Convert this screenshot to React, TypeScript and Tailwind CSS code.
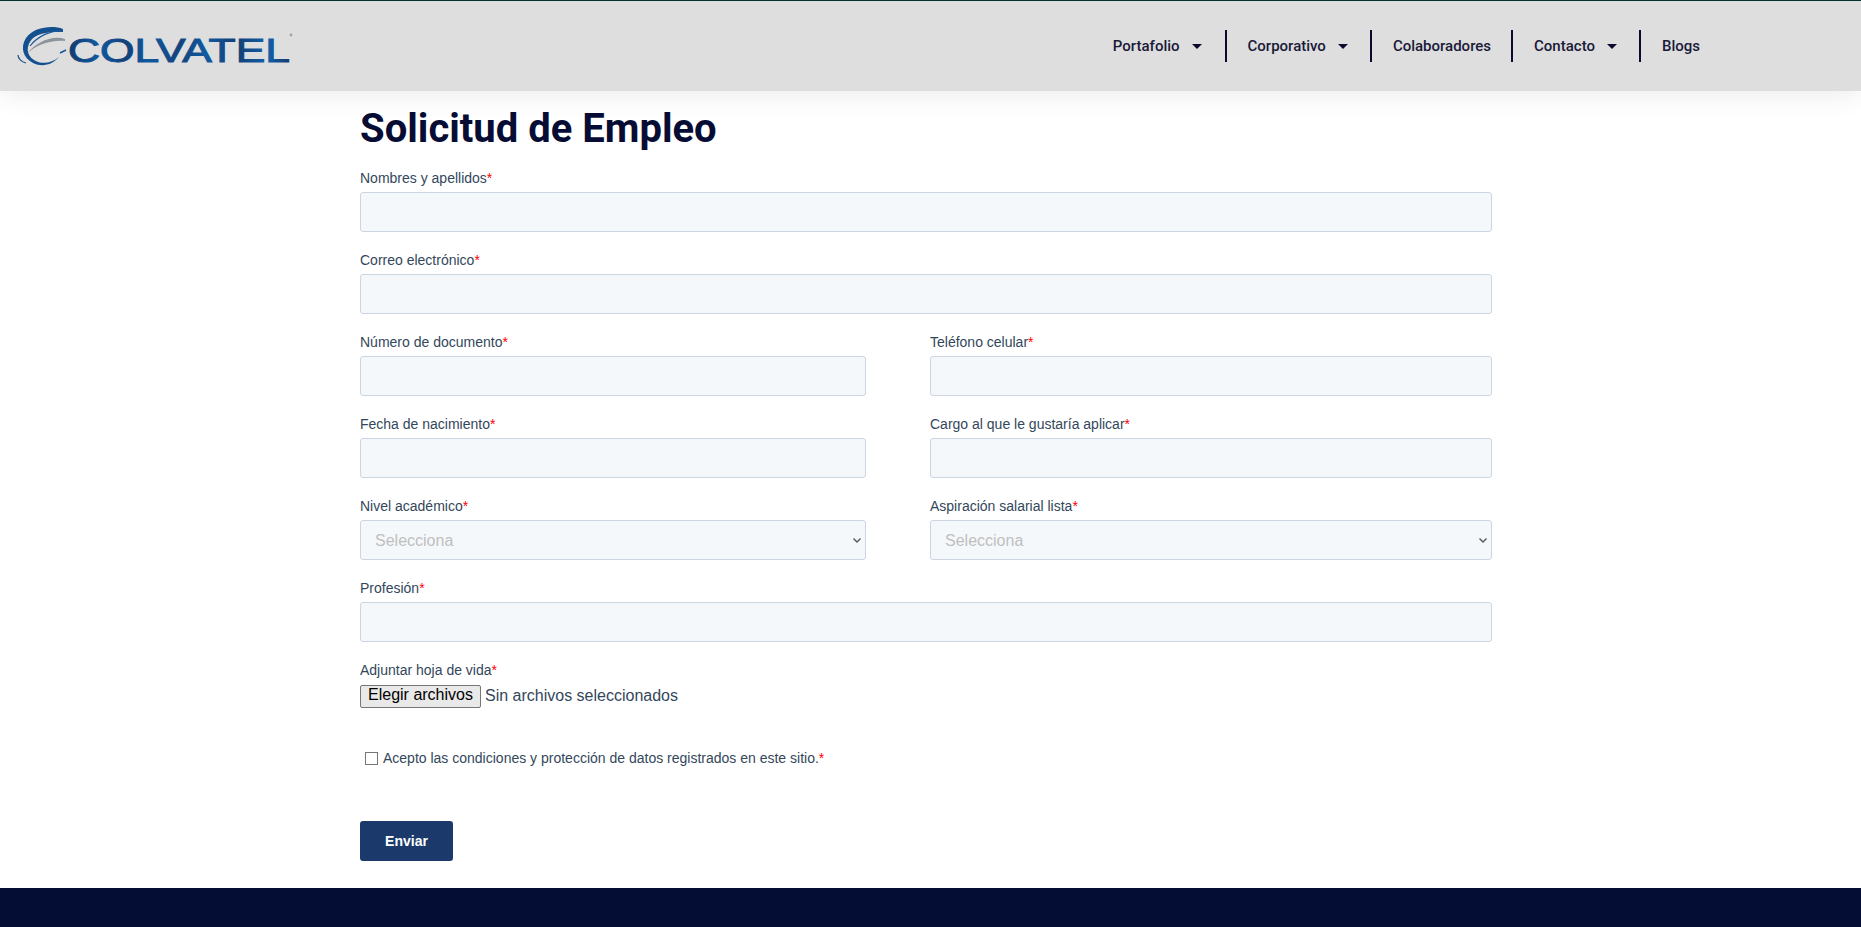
import type { ReactNode } from "react";

const navItems = [
  { label: "Portafolio", caret: true, pad: "pr-[23px]" },
  { label: "Corporativo", caret: true, pad: "pr-[22px]" },
  { label: "Colaboradores", caret: false, pad: "pr-[20px]" },
  { label: "Contacto", caret: true, pad: "pr-[22px]" },
  { label: "Blogs", caret: false, pad: "pr-[21px]" },
];

const Logo = () => (
  <svg width="280" height="56" viewBox="0 0 280 56" className="block">
    <defs>
      <linearGradient id="word" x1="52" y1="0" x2="274" y2="0" gradientUnits="userSpaceOnUse">
        <stop offset="0" stopColor="#123a6e" />
        <stop offset="0.14" stopColor="#0f5aa0" />
        <stop offset="0.26" stopColor="#123f78" />
        <stop offset="0.36" stopColor="#0f5aa0" />
        <stop offset="0.5" stopColor="#14427c" />
        <stop offset="0.62" stopColor="#0f5aa0" />
        <stop offset="0.76" stopColor="#143f75" />
        <stop offset="0.9" stopColor="#1260a8" />
        <stop offset="1" stopColor="#16396b" />
      </linearGradient>
    </defs>
    <path d="M47 11C36 7 18 9 10 20C4 29 7 40 17 45C27 50 37 46 43 39C36 45 26 47 18 42C10 37 10 28 16 21C23 14 36 14 47 14Z" fill="#14508f" />
    <path d="M49 21C36 17 20 24 11 36C20 27 34 22 49 23Z" fill="#8d959c" />
    <path d="M47 13C35 12 22 18 14 28" fill="none" stroke="#1a5a9c" strokeWidth="1.2" />
    <path d="M2 37C2 41 6 44 10 45" fill="none" stroke="#1a4f8c" strokeWidth="1.2" />
    <path d="M44 35L50 32" fill="none" stroke="#1a5a9c" strokeWidth="1.6" />
    <text
      x="52"
      y="44"
      textLength="222"
      lengthAdjust="spacingAndGlyphs"
      fill="url(#word)"
      stroke="url(#word)"
      strokeWidth="1"
      className="font-['Liberation_Sans',sans-serif] text-[34px]"
    >
      COLVATEL
    </text>
    <circle cx="275" cy="17" r="1.4" fill="#9aa4ae" />
  </svg>
);

const Header = () => (
  <header className="relative z-10 h-[91px] border-t border-[#04302f] bg-[#dedede] shadow-[0_0_30px_rgba(0,0,0,0.1)]">
    <div className="flex h-full items-center justify-between pl-[16px] pr-[140px]">
      <Logo />
      <nav className="flex items-center">
        {navItems.map((item, i) => (
          <a
            key={item.label}
            className={`flex h-[32px] items-center gap-[12px] pl-[21px] font-['Roboto',sans-serif] text-[15px] font-medium text-[#1a1938] ${item.pad} ${i < navItems.length - 1 ? "border-r-2 border-[#0b0a2e]" : ""}`}
          >
            {item.label}
            {item.caret && <span className="h-0 w-0 border-x-[5px] border-t-[5px] border-x-transparent border-t-[#0b0a2e]" />}
          </a>
        ))}
      </nav>
    </div>
  </header>
);

const Label = ({ children }: { children: ReactNode }) => (
  <label className="mb-[4px] block text-[14px] leading-[20px] text-[#33475b]">
    {children}
    <span className="text-[#ff0000]">*</span>
  </label>
);

const Field = ({ label }: { label: string }) => (
  <div>
    <Label>{label}</Label>
    <input className="block h-[40px] w-full rounded-[3px] border border-[#cbd6e2] bg-[#f5f8fa]" />
  </div>
);

const SelectField = ({ label }: { label: string }) => (
  <div>
    <Label>{label}</Label>
    <div className="relative">
      <select defaultValue="" className="block h-[40px] w-full appearance-none rounded-[3px] border border-[#cbd6e2] bg-[#f5f8fa] pt-[1px] pl-[14px] text-[16px] text-[#bfbfbf]">
        <option value="" disabled>
          Selecciona
        </option>
      </select>
      <svg width="8" height="5" viewBox="0 0 8 5" className="absolute top-[18px] right-[5px]">
        <path d="M0.5 0.5L4 4L7.5 0.5" fill="none" stroke="#555" strokeWidth="1.4" />
      </svg>
    </div>
  </div>
);

export default function App() {
  return (
    <div className="flex h-[927px] flex-col overflow-hidden bg-white font-['Liberation_Sans',sans-serif]">
      <Header />
      <main className="flex-1 pl-[360px]">
        <div className="w-[1132px]">
          <h1 className="mt-[15px] font-['Roboto',sans-serif] text-[40px] leading-[46px] font-bold text-[#060c33]">Solicitud de Empleo</h1>
          <form className="mt-[16px] flex flex-col gap-[18px]">
            <Field label="Nombres y apellidos" />
            <Field label="Correo electrónico" />
            <div className="grid grid-cols-[506px_562px] gap-x-[64px] gap-y-[18px]">
              <Field label="Número de documento" />
              <Field label="Teléfono celular" />
              <Field label="Fecha de nacimiento" />
              <Field label="Cargo al que le gustaría aplicar" />
              <SelectField label="Nivel académico" />
              <SelectField label="Aspiración salarial lista" />
            </div>
            <Field label="Profesión" />
            <div>
              <Label>Adjuntar hoja de vida</Label>
              <div className="flex items-center gap-[4px] text-[16px] text-[#33475b]">
                <button type="button" className="h-[23px] w-[121px] rounded-[2px] border border-[#767676] bg-[#e9e9e9] pb-[4px] leading-[18px] text-black">
                  Elegir archivos
                </button>
                <span>Sin archivos seleccionados</span>
              </div>
            </div>
            <label className="mt-[22px] flex items-center gap-[5px] pl-[5px] text-[14px] leading-[20px] text-[#33475b]">
              <input type="checkbox" className="h-[13px] w-[13px] appearance-none border border-[#767676] bg-white" />
              <span>
                Acepto las condiciones y protección de datos registrados en este sitio.<span className="text-[#ff0000]">*</span>
              </span>
            </label>
            <button type="button" className="mt-[35px] h-[40px] w-[93px] rounded-[3px] bg-[#1b3a6b] text-[14px] font-bold text-white">
              Enviar
            </button>
          </form>
        </div>
      </main>
      <footer className="h-[39px] bg-[#040d33]" />
    </div>
  );
}
